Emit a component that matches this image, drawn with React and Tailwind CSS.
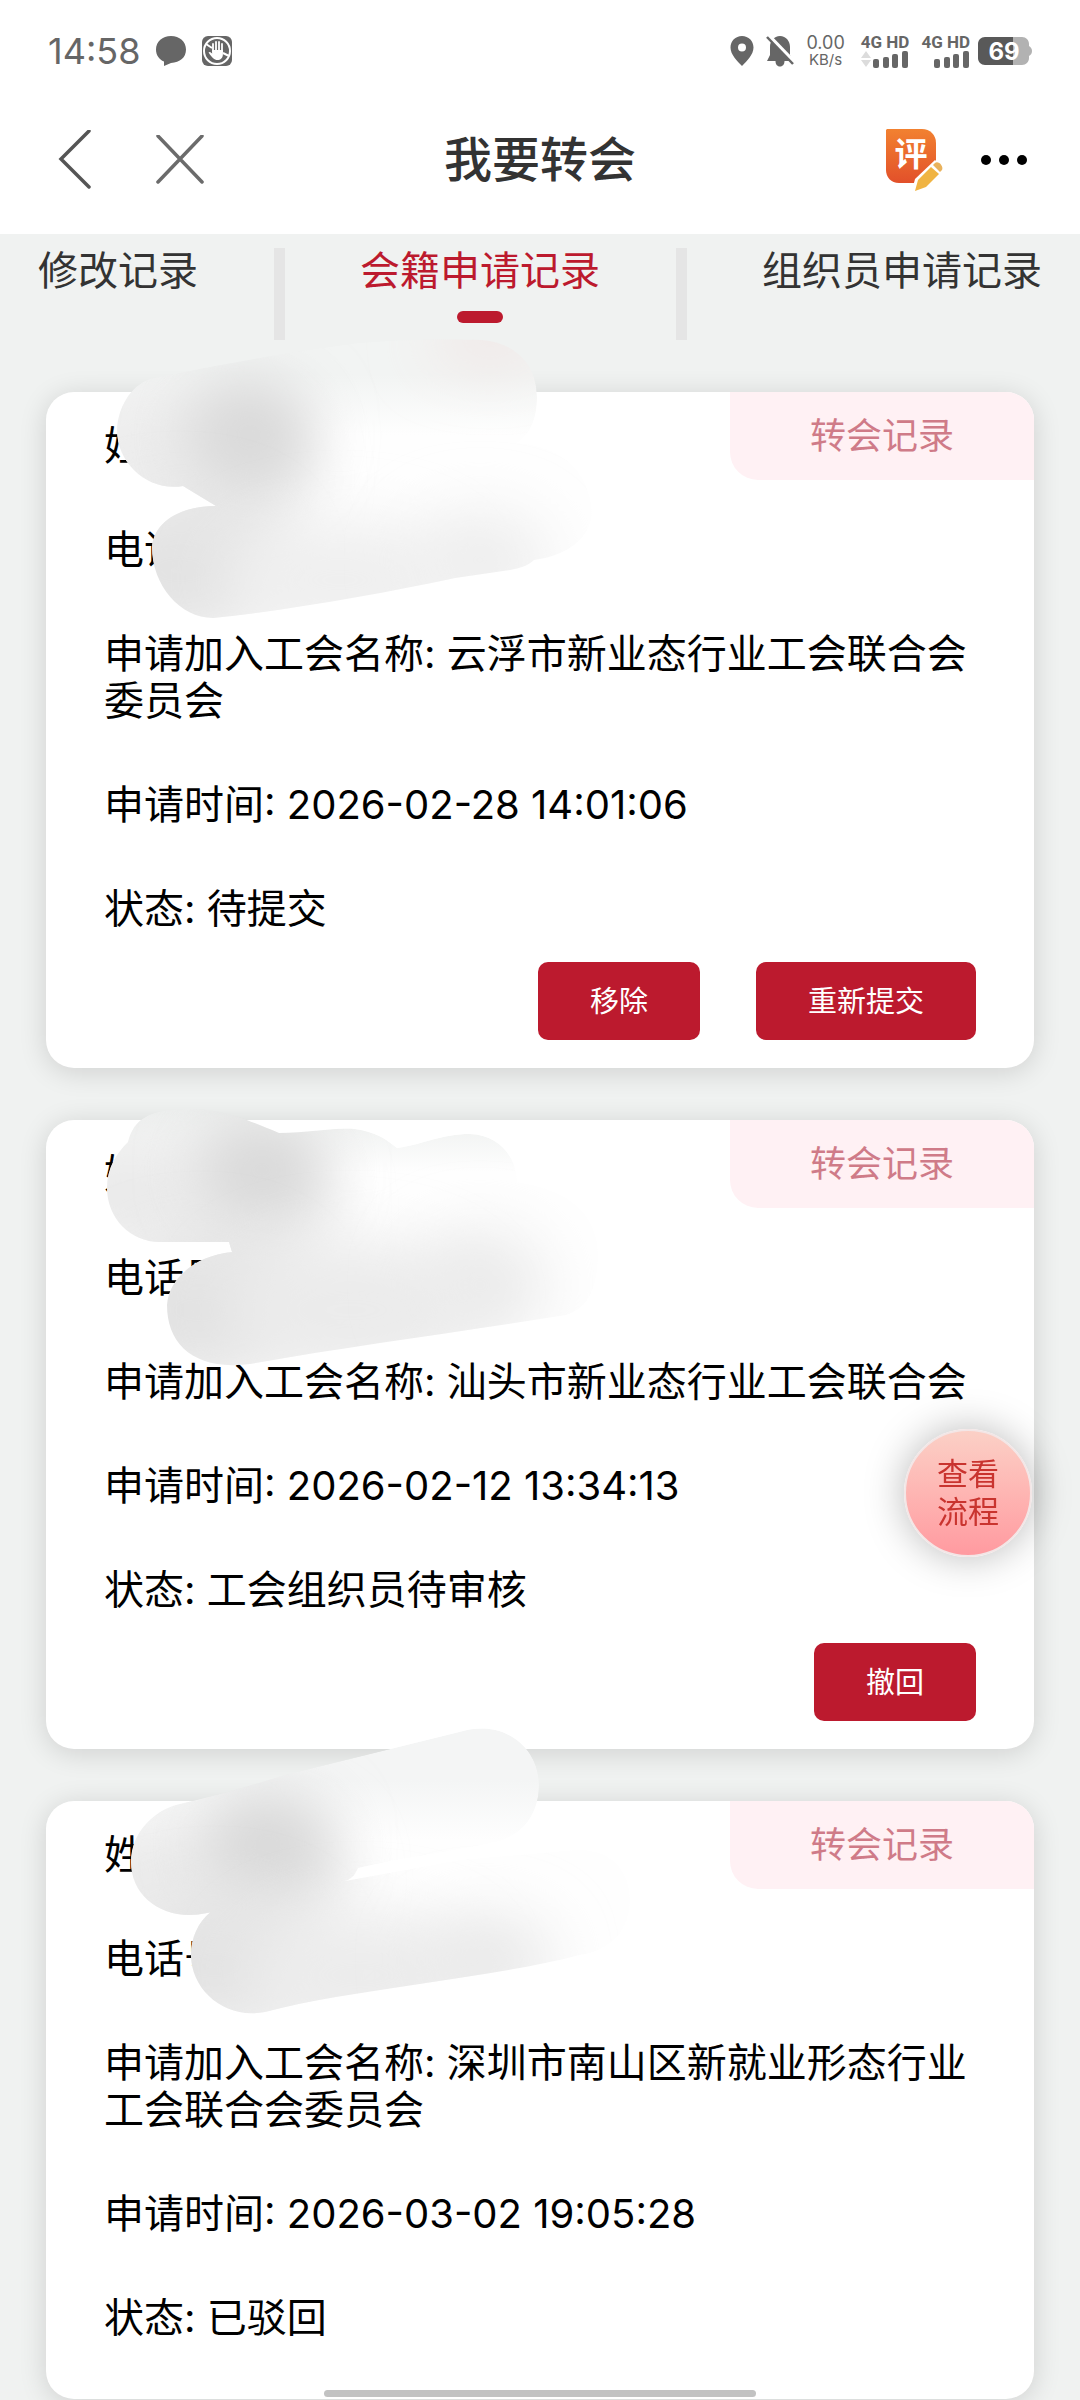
import React, { useState } from 'react';

const tabs = ['修改记录', '会籍申请记录', '组织员申请记录'];

const records = [
  {
    id: 1,
    union: '云浮市新业态行业工会联合会委员会',
    time: '2026-02-28 14:01:06',
    status: '待提交',
    actions: ['移除', '重新提交'],
  },
  {
    id: 2,
    union: '汕头市新业态行业工会联合会',
    time: '2026-02-12 13:34:13',
    status: '工会组织员待审核',
    actions: ['撤回'],
  },
  {
    id: 3,
    union: '深圳市南山区新就业形态行业工会联合会委员会',
    time: '2026-03-02 19:05:28',
    status: '已驳回',
    actions: [],
  },
];

// Privacy smudges over the name and phone rows, one set per record
const smudges = {
  1: {
    viewBox: '46 392 600 240',
    paths: [
      'M117 430C118 408 130 386 150 379C210 366 290 352 358 343C400 339 450 339 482 340C516 343 537 365 537 397C537 420 530 434 517 443C560 446 590 470 592 513C590 540 565 556 534 560C528 566 520 568 510 570L455 578C380 594 290 610 213 618C180 618 152 585 152 547C154 522 180 506 216 506L183 486C150 492 117 465 117 430Z',
    ],
    top: 375,
    edge: '#f2f4f3',
    spots: [
      { cx: 140, cy: 450, rx: 90, ry: 70, fill: '#ededed' },
      { cx: 235, cy: 480, rx: 70, ry: 90, fill: '#eaeaea' },
      { cx: 250, cy: 435, rx: 64, ry: 56, fill: '#d9d9d9' },
      { cx: 490, cy: 340, rx: 60, ry: 26, fill: '#f0e6e5' },
      { cx: 180, cy: 570, rx: 100, ry: 70, fill: '#e3e3e3' },
      { cx: 340, cy: 580, rx: 120, ry: 60, fill: '#efefef' },
      { cx: 480, cy: 560, rx: 70, ry: 50, fill: '#eeeeee' },
    ],
  },
  2: {
    viewBox: '46 1120 600 240',
    paths: [
      'M128 1142C134 1118 150 1110 185 1109C220 1109 236 1115 279 1133C310 1133 335 1127 355 1129C376 1132 386 1139 397 1148C425 1144 440 1134 470 1134C500 1135 517 1158 517 1182C570 1190 600 1215 598 1260C596 1290 588 1308 566 1315C460 1332 350 1346 250 1364C195 1371 167 1345 167 1305C169 1278 195 1256 232 1252L229 1242H160C130 1242 107 1218 107 1188C107 1168 116 1154 128 1142Z',
    ],
    top: 1112,
    edge: '#edefee',
    spots: [
      { cx: 130, cy: 1195, rx: 90, ry: 60, fill: '#eaeaea' },
      { cx: 250, cy: 1210, rx: 80, ry: 80, fill: '#eaeaea' },
      { cx: 262, cy: 1170, rx: 64, ry: 48, fill: '#d8d8d8' },
      { cx: 200, cy: 1310, rx: 100, ry: 70, fill: '#e2e2e2' },
      { cx: 350, cy: 1310, rx: 130, ry: 70, fill: '#ebebeb' },
      { cx: 480, cy: 1285, rx: 66, ry: 56, fill: '#ebebeb' },
    ],
  },
  3: {
    viewBox: '46 1801 600 240',
    paths: [
      'M131 1862C131 1832 155 1808 184 1803C215 1796 250 1786 285 1775L459 1732C505 1718 539 1748 539 1785C539 1815 522 1834 500 1841C450 1852 400 1858 358 1868C354 1878 348 1881 340 1882C290 1889 245 1904 207 1913C165 1922 131 1898 131 1862Z',
      'M191 1955C191 1930 206 1908 230 1903C265 1895 300 1888 340 1882L459 1860L574 1850C610 1848 630 1870 630 1900C630 1930 612 1950 580 1955C530 1968 470 1976 413 1985C360 1993 310 2000 265 2012C225 2020 191 1990 191 1955Z',
    ],
    top: 1780,
    edge: '#f4f5f5',
    spots: [
      { cx: 150, cy: 1875, rx: 90, ry: 60, fill: '#ebebeb' },
      { cx: 265, cy: 1880, rx: 80, ry: 70, fill: '#e9e9e9' },
      { cx: 268, cy: 1844, rx: 64, ry: 50, fill: '#d8d8d8' },
      { cx: 215, cy: 1965, rx: 100, ry: 70, fill: '#e3e3e3' },
      { cx: 360, cy: 1975, rx: 120, ry: 64, fill: '#ececec' },
      { cx: 487, cy: 1960, rx: 66, ry: 46, fill: '#e9e9e9' },
    ],
  },
};

const Smudge = ({ id }) => {
  const { viewBox, paths, top, edge, spots } = smudges[id];
  return (
    <svg
      viewBox={viewBox}
      className="absolute left-0 top-0 w-[600px] h-[240px] overflow-visible pointer-events-none"
      aria-hidden="true"
    >
      <defs>
        <clipPath id={`shape-${id}`}>
          {paths.map((d) => (
            <path key={d} d={d} />
          ))}
        </clipPath>
        <linearGradient id={`base-${id}`} gradientUnits="userSpaceOnUse" x1="0" y1={top} x2="0" y2={top + 60}>
          <stop offset="0" stopColor={edge} />
          <stop offset="1" stopColor="#fefefe" />
        </linearGradient>
        <filter id={`soft-${id}`} x="-100%" y="-150%" width="300%" height="400%">
          <feGaussianBlur stdDeviation="30" />
        </filter>
      </defs>
      <g clipPath={`url(#shape-${id})`}>
        {paths.map((d) => (
          <path key={d} d={d} fill={`url(#base-${id})`} />
        ))}
        {spots.map((spot) => (
          <ellipse key={`${spot.cx}-${spot.cy}`} {...spot} filter={`url(#soft-${id})`} />
        ))}
      </g>
    </svg>
  );
};

const Signal = ({ arrows }) => (
  <div className="flex flex-col items-end">
    <span className="font-['Roboto'] font-bold text-[17px] leading-4">4G HD</span>
    <svg width="48" height="18" viewBox="0 0 48 18" fill="#666">
      {arrows && <path d="M0 8L5 1L10 8ZM0 10H10L5 17Z" fill="#dcdcdc" />}
      <rect x="12" y="9" width="6" height="9" rx="2" />
      <rect x="22" y="7" width="6" height="11" rx="2" />
      <rect x="31" y="4" width="6" height="14" rx="2" />
      <rect x="41" y="1" width="6" height="17" rx="2" />
    </svg>
  </div>
);

const StatusBar = () => (
  <div className="flex items-center justify-between h-[102px] pl-12 pr-12 text-[#666]">
    <div className="flex items-center">
      <span className="text-[36px] leading-10">14:58</span>
      <svg className="ml-4" width="30" height="30" viewBox="0 0 30 30" fill="#666">
        <path d="M15 0C23.5 0 30 5.700 30 13.500C30 21.500 24 26.500 15 27L8 30V25.500C3 23.500 0 19 0 13.500C0 5.700 6.500 0 15 0Z" />
      </svg>
      <svg className="ml-4" width="30" height="30" viewBox="0 0 30 30" fill="none">
        <rect width="30" height="30" rx="6" fill="#666" />
        <circle cx="15" cy="15" r="13" stroke="#fff" strokeWidth="2" />
        <path d="M4 8L10 12M21 17L27 20" stroke="#fff" strokeWidth="2" />
        <path
          d="M11 16V8M14 15V6M17 15V6M20 16V8"
          stroke="#fff"
          strokeWidth="1.800"
          strokeLinecap="round"
        />
        <path d="M10.200 14H20.900V18C20.900 22 18.500 24 15.500 24C12 24 10.500 22 6.500 16.500C7.500 15.500 8.500 16 10.200 17.500Z" fill="#fff" />
      </svg>
    </div>
    <div className="flex items-center gap-3">
      <svg width="24" height="30" viewBox="0 0 24 30" fill="#666">
        <path
          fillRule="evenodd"
          d="M12 0C18.500 0 23.500 5 23.500 11.500C23.500 18.500 17 25 12 30C7 25 .5 18.500 .5 11.500C.5 5 5.500 0 12 0ZM12 7.500A4 4 0 1 0 12 15.500A4 4 0 1 0 12 7.500Z"
        />
      </svg>
      <svg width="28" height="31" viewBox="0 0 28 31">
        <path
          d="M14 0C20 0 24 5 24 11V19L27 25H18.500C18.500 28 17 30.500 14 30.500C11 30.500 9.500 28 9.500 25H1L4 19V11C4 5 8 0 14 0Z"
          fill="#666"
        />
        <path d="M3 0L29 27" stroke="#fff" strokeWidth="4" />
        <path d="M1 1L27 28" stroke="#666" strokeWidth="2.500" />
      </svg>
      <div className="flex flex-col items-center">
        <span className="text-[18px] leading-[18px]">0.00</span>
        <span className="text-[15px] leading-4">KB/s</span>
      </div>
      <div className="flex gap-3 ml-1">
        <Signal arrows />
        <Signal />
      </div>
      <svg className="-ml-1" width="54" height="28" viewBox="0 0 54 28">
        <path d="M7 0H36V28H7C3 28 0 25 0 21V7C0 3 3 0 7 0Z" fill="#595959" />
        <path d="M35 0H44C48 0 51 3 51 7V9C53 10 54 12 54 14C54 16 53 18 51 19V21C51 25 48 28 44 28H35Z" fill="#b2b2b2" />
        <text x="26" y="23" textAnchor="middle" fill="#fff" className="font-['Inter'] font-bold text-[24px]">
          69
        </text>
      </svg>
    </div>
  </div>
);

const NavBar = () => (
  <nav className="grid grid-cols-3 items-center h-[132px] pb-4 px-12">
    <div className="flex items-center gap-12">
      <button type="button" aria-label="返回" className="pl-[10px]">
        <svg width="34" height="60" viewBox="0 0 34 60" fill="none" stroke="#555" strokeWidth="3.500" strokeLinecap="round">
          <path d="M31 1L3 29L31 57" />
        </svg>
      </button>
      <button type="button" aria-label="关闭" className="pl-4">
        <svg width="48" height="50" viewBox="0 0 48 50" fill="none" stroke="#6b6b6b" strokeWidth="3.500" strokeLinecap="round">
          <path d="M2 1L46 47M46 1L2 47" />
        </svg>
      </button>
    </div>
    <h1 className="text-center text-[48px] leading-[56px] font-medium text-[#333]">我要转会</h1>
    <div className="flex items-center justify-end gap-9 pr-1">
      <button type="button" aria-label="评价">
        <svg width="60" height="62" viewBox="0 0 60 62">
          <defs>
            <linearGradient id="badge" x1="0" y1="0" x2="0" y2="1">
              <stop offset="0" stopColor="#f28130" />
              <stop offset="1" stopColor="#e2502a" />
            </linearGradient>
          </defs>
          <path d="M3 0H38C46 0 52 6 52 14V33L30 54H15C7 54 2 48 2 41V1Z" fill="url(#badge)" />
          <text
            x="27"
            y="37"
            textAnchor="middle"
            fill="#fff"
            className="font-['Noto_Sans_CJK_SC'] font-bold text-[33px]"
          >
            评
          </text>
          <path d="M28 62L31 50L51 31L60 39L44 58Z" fill="#fff" />
          <path d="M31 62L34 51L47 38L55 45L42 58Z" fill="#f0b443" />
          <path d="M49 36L51 34C54 31 60 37 58 41L56 43Z" fill="#e9b25c" />
        </svg>
      </button>
      <button type="button" aria-label="更多">
        <svg width="48" height="12" viewBox="0 0 48 12">
          <circle cx="6" cy="6" r="5" />
          <circle cx="24" cy="6" r="5" />
          <circle cx="42" cy="6" r="5" />
        </svg>
      </button>
    </div>
  </nav>
);

const Row = ({ label, value }) => (
  <p className="pt-[30px] pb-[27px]">
    {label}: {value}
  </p>
);

const RecordCard = ({ record }) => (
  <article className="relative bg-white rounded-[28px] shadow-[0_4px_28px_rgba(0,0,0,0.14)] px-[58px] text-[40px] leading-[47px] text-black">
    <button
      type="button"
      className="absolute right-0 top-0 h-[88px] px-20 rounded-tr-[28px] rounded-bl-[28px] bg-[#fff1f4] text-[36px] text-[#cf7b88]"
    >
      转会记录
    </button>
    <Row label="姓名" />
    <Row label="电话号码" />
    <Row label="申请加入工会名称" value={record.union} />
    <Row label="申请时间" value={record.time} />
    <Row label="状态" value={record.status} />
    <div className="flex justify-end gap-14 pt-[3px] pb-7">
      {record.actions.map((action) => (
        <button
          key={action}
          type="button"
          className="h-[78px] px-[52px] rounded-[10px] bg-[#bc1a2e] text-[29px] text-white"
        >
          {action}
        </button>
      ))}
    </div>
    <Smudge id={record.id} />
  </article>
);

const App = () => {
  const [active, setActive] = useState(tabs[1]);

  return (
    <div className="min-h-screen bg-[#f0f2f1] font-['Inter','Noto_Sans_CJK_SC',sans-serif]">
      <header className="bg-white">
        <StatusBar />
        <NavBar />
      </header>

      <div className="flex justify-between px-[38px] pt-[14px] h-[106px]">
        {tabs.map((tab, index) => (
          <React.Fragment key={tab}>
            {index > 0 && <span className="w-[11px] bg-[#e5e5e5]" />}
            <button
              type="button"
              onClick={() => setActive(tab)}
              className={`flex flex-col items-center text-[40px] leading-[46px] ${
                active === tab ? 'text-[#bc1a2e]' : 'text-[#333]'
              }`}
            >
              {tab}
              {active === tab && <span className="mt-[17px] w-[46px] h-3 rounded-full bg-[#bc1a2e]" />}
            </button>
          </React.Fragment>
        ))}
      </div>

      <main className="flex flex-col gap-[52px] px-[46px] pt-[52px]">
        {records.map((record) => (
          <RecordCard key={record.id} record={record} />
        ))}
      </main>

      <button
        type="button"
        className="fixed right-12 bottom-[843px] size-32 rounded-full border-2 border-[#f3e6e6] bg-linear-to-b from-[#fbd0c6] to-[#ff9aa0] shadow-[0_0_40px_rgba(0,0,0,0.28)] text-[31px] leading-[38px] text-[#c9342f]"
      >
        查看
        <br />
        流程
      </button>

      <div className="fixed inset-x-0 bottom-[3px] flex justify-center">
        <span className="w-2/5 h-[7px] rounded-full bg-[#c2c2c2]" />
      </div>
    </div>
  );
};

export default App;
